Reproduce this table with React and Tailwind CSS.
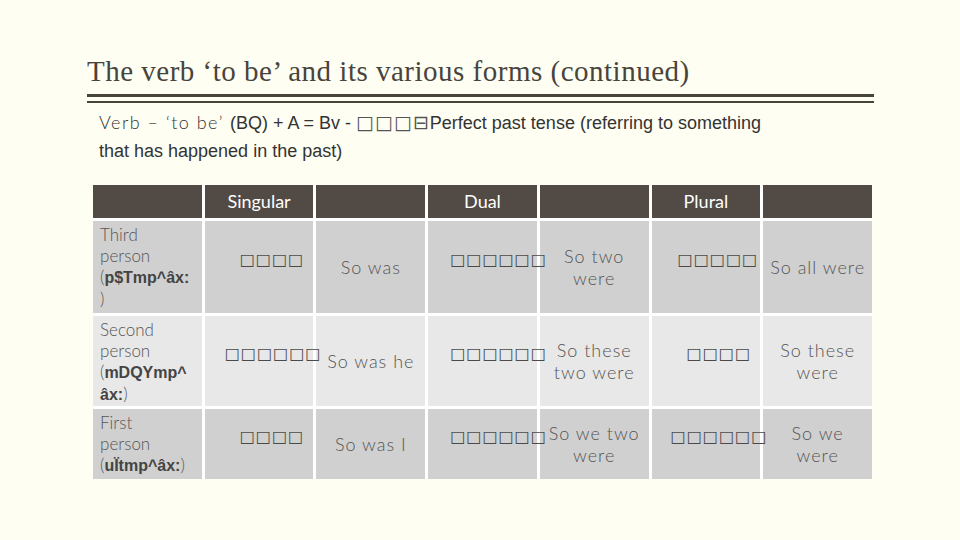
import React from 'react';

const BOX = '□';
const boxes = (n) => BOX.repeat(n);

const Boxes = ({ n, pad }) => (
  <div className={`flex h-full items-center whitespace-nowrap pb-[14px] ${pad}`}>
    <span className="font-['DejaVu_Sans'] text-[16px] leading-none tracking-[1px] text-[#4a4a4a]">
      {boxes(n)}
    </span>
  </div>
);

const Gloss = ({ lines }) => (
  <div className="flex h-full flex-col items-center justify-center whitespace-nowrap text-center font-['Lato'] text-[18px] font-light leading-[22px] tracking-[1px] text-[#555]">
    {lines.map((l) => (
      <span key={l}>{l}</span>
    ))}
  </div>
);

const Bold = ({ children }) => (
  <span className="font-['Liberation_Sans'] text-[16px] font-bold leading-[21px] text-[#444]">{children}</span>
);

const Person = ({ lines, last }) => (
  <div className="flex flex-col pl-[7px] pt-[3px] font-['Lato'] text-[17px] font-light leading-[21px] text-[#555]">
    {lines.map((l) => (
      <span key={l}>{l}</span>
    ))}
    {last}
  </div>
);

export default function App() {
  const headers = ['', 'Singular', '', 'Dual', '', 'Plural', ''];

  return (
    <div className="h-[540px] w-[960px] overflow-hidden bg-[#fefef3]">
      <div className="pl-[87px] pt-[55px]">
        <h1 className="font-['Liberation_Serif'] text-[29px] leading-[33px] tracking-[0.5px] text-[#48443c]">
          The verb ‘to be’ and its various forms (continued)
        </h1>
        <div className="mt-[6px] w-[787px]">
          <div className="h-[3px] bg-[#48443c]" />
          <div className="mt-[4px] h-[2px] bg-[#48443c]" />
        </div>

        <div className="mt-[5px] pl-[12px] text-[18px] leading-[28px] text-[#333]">
          <div className="whitespace-nowrap">
            <span className="font-['Lato'] text-[18px] font-light tracking-[1.5px] text-[#333]">
              Verb – ‘to be’{' '}
            </span>
            <span className="font-['Liberation_Sans']">(BQ) + A = Bv - </span>
            <span className="font-['DejaVu_Sans'] text-[19px] tracking-[1px] text-[#555]">□□□⊟</span>
            <span className="font-['Liberation_Sans']">Perfect past tense (referring to something</span>
          </div>
          <div className="font-['Liberation_Sans']">that has happened in the past)</div>
        </div>
      </div>

      <div className="ml-[93px] mt-[20px] grid w-[779px] grid-cols-7 grid-rows-[33px_92px_90px_70px] gap-[3px] bg-white">
        {headers.map((h, i) => (
          <div
            key={i}
            className="flex items-center justify-center bg-[#524a45] font-['Lato'] text-[18px] text-white"
          >
            {h}
          </div>
        ))}

        {/* Third person */}
        <div className="bg-[#d0d0d0]">
          <Person
            lines={['Third', 'person']}
            last={
              <>
                <span>(<Bold>p$Tmp^âx:</Bold></span>
                <span>)</span>
              </>
            }
          />
        </div>
        <div className="bg-[#d0d0d0]"><Boxes n={4} pad="pl-[35px]" /></div>
        <div className="bg-[#d0d0d0]"><Gloss lines={['So  was']} /></div>
        <div className="relative z-10 bg-[#d0d0d0]"><Boxes n={6} pad="pl-[22px]" /></div>
        <div className="bg-[#d0d0d0]"><Gloss lines={['So  two', 'were']} /></div>
        <div className="relative z-10 bg-[#d0d0d0]"><Boxes n={5} pad="pl-[26px]" /></div>
        <div className="bg-[#d0d0d0]"><Gloss lines={['So  all were']} /></div>

        {/* Second person */}
        <div className="bg-[#e8e8e8]">
          <Person
            lines={['Second', 'person']}
            last={
              <>
                <span>(<Bold>mDQYmp^</Bold></span>
                <span><Bold>âx:</Bold>)</span>
              </>
            }
          />
        </div>
        <div className="relative z-10 bg-[#e8e8e8]"><Boxes n={6} pad="pl-[20px]" /></div>
        <div className="bg-[#e8e8e8]"><Gloss lines={['So  was  he']} /></div>
        <div className="relative z-10 bg-[#e8e8e8]"><Boxes n={6} pad="pl-[22px]" /></div>
        <div className="bg-[#e8e8e8]"><Gloss lines={['So  these', 'two  were']} /></div>
        <div className="bg-[#e8e8e8]"><Boxes n={4} pad="pl-[35px]" /></div>
        <div className="bg-[#e8e8e8]"><Gloss lines={['So  these', 'were']} /></div>

        {/* First person */}
        <div className="bg-[#d0d0d0]">
          <Person
            lines={['First', 'person']}
            last={<span className="whitespace-nowrap">(<Bold>uÏtmp^âx:</Bold>)</span>}
          />
        </div>
        <div className="bg-[#d0d0d0]"><Boxes n={4} pad="pl-[35px]" /></div>
        <div className="bg-[#d0d0d0]"><Gloss lines={['So  was  I']} /></div>
        <div className="relative z-10 bg-[#d0d0d0]"><Boxes n={6} pad="pl-[22px]" /></div>
        <div className="bg-[#d0d0d0]"><Gloss lines={['So  we  two', 'were']} /></div>
        <div className="relative z-10 bg-[#d0d0d0]"><Boxes n={6} pad="pl-[19px]" /></div>
        <div className="bg-[#d0d0d0]"><Gloss lines={['So  we', 'were']} /></div>
      </div>
    </div>
  );
}
